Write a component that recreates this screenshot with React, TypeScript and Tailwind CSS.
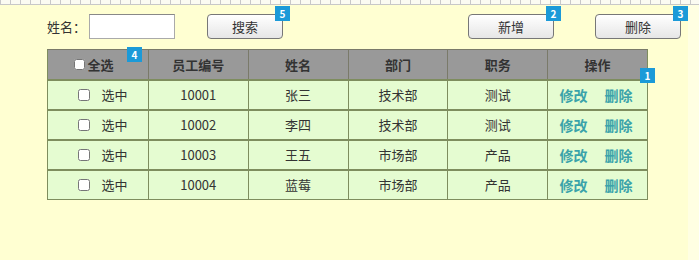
import { useState } from "react";

type Emp = { id: string; name: string; dept: string; job: string };

const rows: Emp[] = [
  { id: "10001", name: "张三", dept: "技术部", job: "测试" },
  { id: "10002", name: "李四", dept: "技术部", job: "测试" },
  { id: "10003", name: "王五", dept: "市场部", job: "产品" },
  { id: "10004", name: "蓝莓", dept: "市场部", job: "产品" },
];

function Badge({ n, className }: { n: number; className: string }) {
  return (
    <span
      className={`absolute flex h-[15px] w-[15px] items-center justify-center bg-[#1b9ad8] text-[10px] font-bold leading-none text-white ${className}`}
    >
      {n}
    </span>
  );
}

function Btn({ label, badge, className }: { label: string; badge: number; className: string }) {
  return (
    <div className={`relative ${className}`}>
      <button className="h-[25px] w-full rounded-[4px] border border-[#777] bg-gradient-to-b from-white to-[#e6e6e6] text-[13px] text-[#333]">
        {label}
      </button>
      <Badge n={badge} className="-top-[8px] right-[-7px]" />
    </div>
  );
}

const cell = "flex items-center justify-center border-l border-[#7e8d5e] first:border-l-0";

export default function App() {
  const [name, setName] = useState("");

  return (
    <div className="relative h-[260px] w-[699px] overflow-hidden bg-[#ffffd2] font-['Noto_Sans_CJK_SC','Noto_Sans',sans-serif] text-[13px] text-[#333]">
      {/* ruler strip */}
      <svg className="absolute left-0 top-0" width="699" height="5">
        <defs>
          <pattern id="tick" width="10" height="5" patternUnits="userSpaceOnUse">
            <rect x="0" y="0" width="1" height="4" fill="#c8c8c8" />
          </pattern>
        </defs>
        <rect width="699" height="4" fill="#fbfbf2" />
        <rect width="699" height="4" fill="url(#tick)" />
        <rect y="4" width="699" height="1" fill="#c8c8c8" />
      </svg>
      <div className="absolute right-0 top-[5px] h-full w-[11px] bg-[#ffffe2]" />

      <div className="relative flex items-center pl-[47px] pt-[14px]">
        <span>姓名：</span>
        <input
          value={name}
          onChange={(e) => setName(e.target.value)}
          className="ml-[3px] h-[25px] w-[86px] border border-[#aaa] border-t-[#888] bg-white px-1 outline-none"
        />
        <Btn label="搜索" badge={5} className="ml-[32px] w-[76px]" />
        <Btn label="新增" badge={2} className="ml-[185px] w-[86px]" />
        <Btn label="删除" badge={3} className="ml-[41px] w-[86px]" />
      </div>

      <div className="relative ml-[47px] mt-[10px] w-[601px] border border-[#7e8d5e] border-t-[#7a7a6a] text-center">
        <div className="grid h-[29px] grid-cols-6 bg-[#999999] font-bold text-[#333]">
          <div className="flex items-center justify-center">
            <span className="-ml-[8px] inline-flex items-center">
              <input type="checkbox" className="mr-[2px] h-[11px] w-[11px]" />
              全选
            </span>
          </div>
          {["员工编号", "姓名", "部门", "职务", "操作"].map((h) => (
            <div key={h} className="flex items-center justify-center border-l border-[#7a7a6a]">
              {h}
            </div>
          ))}
        </div>
        {rows.map((r) => (
          <div key={r.id} className="grid h-[30px] grid-cols-6 border-t-2 border-[#7e8d5e] bg-[#e5fcd1]">
            <div className={cell}>
              <span className="ml-[10px] inline-flex items-center gap-[11px]">
                <input type="checkbox" className="h-[12px] w-[12px]" />
                选中
              </span>
            </div>
            <div className={cell}>{r.id}</div>
            <div className={cell}>{r.name}</div>
            <div className={cell}>{r.dept}</div>
            <div className={cell}>{r.job}</div>
            <div className={`${cell} gap-[17px] pr-[3px] text-[14px] font-bold text-[#3aa3aa]`}>
              <a href="#">修改</a>
              <a href="#">删除</a>
            </div>
          </div>
        ))}
        <Badge n={4} className="left-[79px] top-[-3px]" />
        <Badge n={1} className="left-[592px] top-[18px]" />
      </div>
    </div>
  );
}
